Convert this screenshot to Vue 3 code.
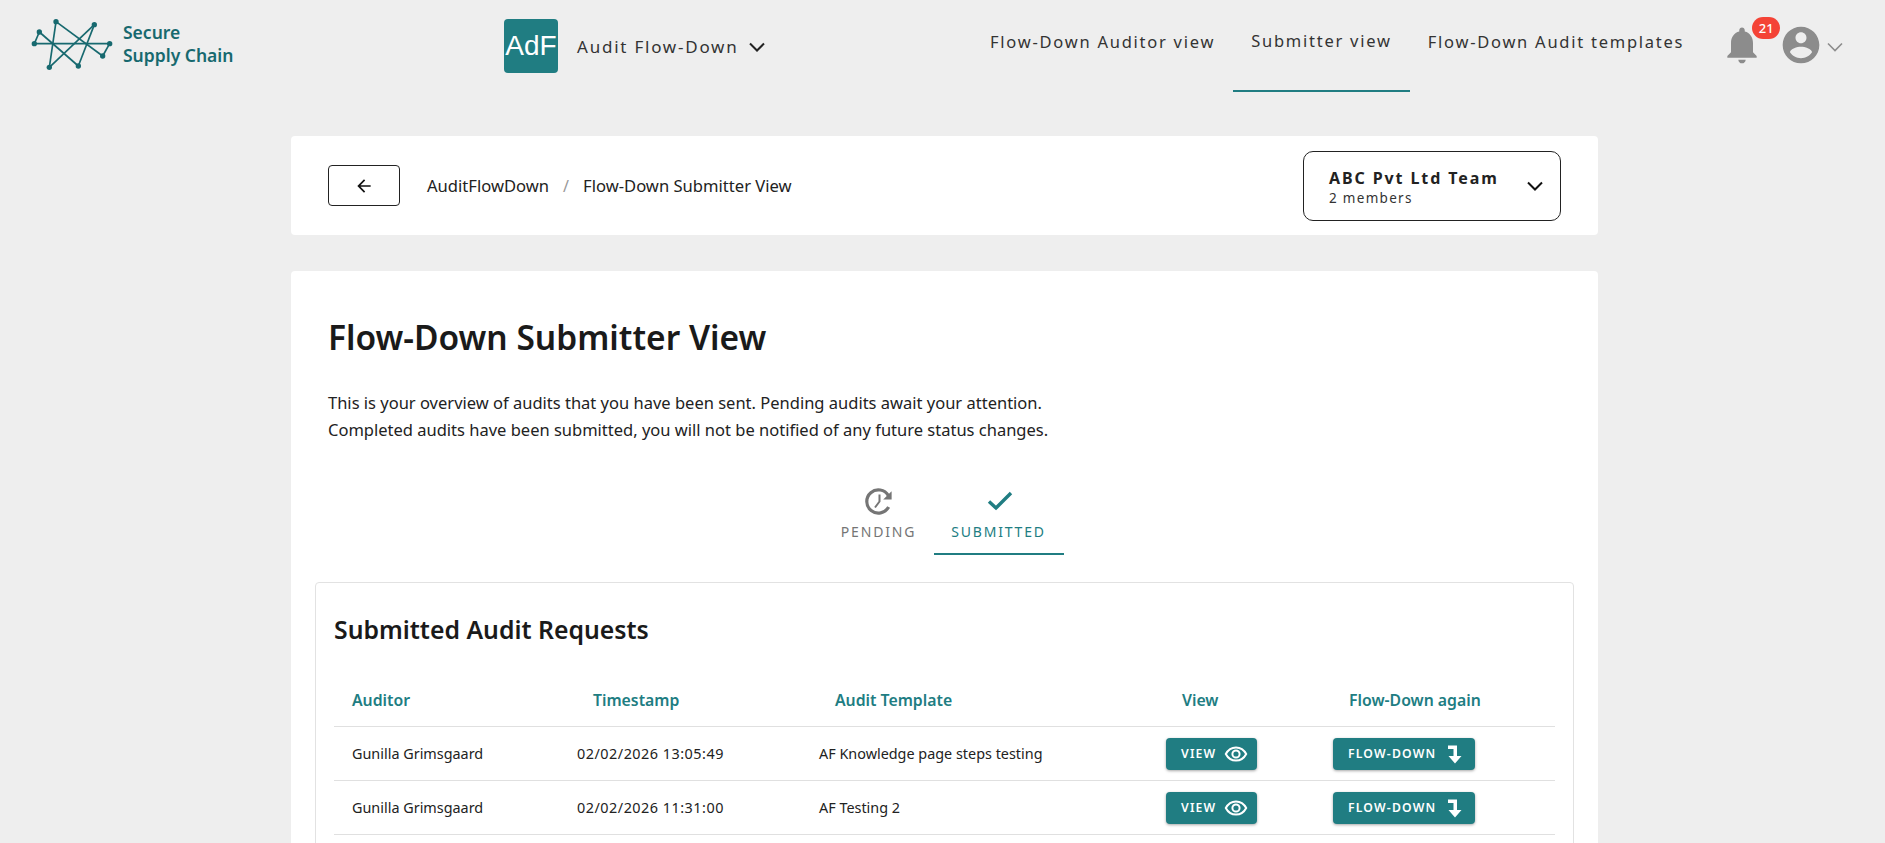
<script setup>
const rows = [
  { auditor: 'Gunilla Grimsgaard', time: '02/02/2026 13:05:49', template: 'AF Knowledge page steps testing' },
  { auditor: 'Gunilla Grimsgaard', time: '02/02/2026 11:31:00', template: 'AF Testing 2' }
]
const edges = [[43,101,269,101],[43,101,58,66],[58,66,175,168],[108,35,88,172],[108,35,248,138],[248,138,269,101],[88,172,223,44],[223,44,175,168]]
const nodes = [[43,101],[58,66],[108,35],[223,44],[269,101],[248,138],[175,168],[88,172]]
</script>

<template>
  <div class="page">
    <header class="topbar">
      <div class="brand">
        <svg class="logo" viewBox="0 0 300 210" width="100" height="70">
          <line v-for="(e, i) in edges" :key="i" :x1="e[0]" :y1="e[1]" :x2="e[2]" :y2="e[3]" stroke="#17696f" stroke-width="5" />
          <circle v-for="(n, i) in nodes" :key="'n' + i" :cx="n[0]" :cy="n[1]" r="8" fill="#17696f" />
        </svg>
        <div class="brand-text">Secure<br />Supply Chain</div>
      </div>
      <div class="app-switch">
        <div class="app-tile">AdF</div>
        <span class="app-name">Audit Flow-Down</span>
        <svg class="chev" width="18" height="12" viewBox="0 0 18 12"><path d="M2 2.500l7 7 7-7" fill="none" stroke="#222" stroke-width="2" /></svg>
      </div>
      <nav class="nav">
        <a class="nav-item">Flow-Down Auditor view</a>
        <a class="nav-item active">Submitter view</a>
        <a class="nav-item">Flow-Down Audit templates</a>
      </nav>
      <div class="bell">
        <svg width="44" height="44" viewBox="0 0 24 24"><path fill="#8c8c8c" d="M12 22c1.100 0 2-.9 2-2h-4c0 1.100.9 2 2 2zm6-6v-5c0-3.070-1.630-5.640-4.500-6.320V4c0-.83-.67-1.500-1.500-1.500s-1.500.67-1.500 1.500v.68C7.640 5.360 6 7.920 6 11v5l-2 2v1h16v-1l-2-2z" /></svg>
        <span class="badge">21</span>
      </div>
      <svg class="avatar" width="44" height="44" viewBox="0 0 24 24"><path fill="#8c8c8c" d="M12 2C6.480 2 2 6.480 2 12s4.480 10 10 10 10-4.480 10-10S17.520 2 12 2zm0 3c1.660 0 3 1.340 3 3s-1.340 3-3 3-3-1.340-3-3 1.340-3 3-3zm0 14.200c-2.500 0-4.710-1.280-6-3.220.03-1.990 4-3.080 6-3.080 1.990 0 5.970 1.090 6 3.080-1.290 1.940-3.500 3.220-6 3.220z" /></svg>
      <svg class="chev-small" width="18" height="12" viewBox="0 0 18 12"><path d="M2 2.500l7 7 7-7" fill="none" stroke="#8c8c8c" stroke-width="1.600" /></svg>
    </header>

    <main class="content">
      <section class="crumb-card">
        <button class="back">
          <svg width="20" height="20" viewBox="0 0 24 24"><path fill="#111" d="M20 11H7.830l5.590-5.590L12 4l-8 8 8 8 1.410-1.410L7.830 13H20v-2z" /></svg>
        </button>
        <span class="crumb">AuditFlowDown</span>
        <span class="sep">/</span>
        <span class="crumb">Flow-Down Submitter View</span>
        <div class="team">
          <div class="team-text">
            <div class="team-name">ABC Pvt Ltd Team</div>
            <div class="team-sub">2 members</div>
          </div>
          <svg width="18" height="12" viewBox="0 0 18 12"><path d="M2 2.500l7 7 7-7" fill="none" stroke="#111" stroke-width="2" /></svg>
        </div>
      </section>

      <section class="main-card">
        <h1>Flow-Down Submitter View</h1>
        <p class="intro">This is your overview of audits that you have been sent. Pending audits await your attention.<br />Completed audits have been submitted, you will not be notified of any future status changes.</p>

        <div class="tabs">
          <div class="tab pend">
            <svg width="30" height="30" viewBox="0 0 30 30">
              <path d="M24.400 9.600A11.600 11.600 0 1 0 24.600 21" fill="none" stroke="#757575" stroke-width="3.200" />
              <path d="M27.600 5.200V13.500H19.200Z" fill="#757575" />
              <path d="M15.500 8.500V15.500L11 21.500" fill="none" stroke="#757575" stroke-width="2" />
            </svg>
            <span>PENDING</span>
          </div>
          <div class="tab on">
            <svg width="30" height="30" viewBox="0 0 30 30"><path d="M5 15.500l7 6.500L27 7" fill="none" stroke="#207d82" stroke-width="3.400" /></svg>
            <span>SUBMITTED</span>
          </div>
        </div>

        <div class="panel">
          <h2>Submitted Audit Requests</h2>
          <div class="row head">
            <div class="c1">Auditor</div>
            <div class="c2">Timestamp</div>
            <div class="c3">Audit Template</div>
            <div class="c4">View</div>
            <div class="c5">Flow-Down again</div>
          </div>
          <div class="row" v-for="(r, i) in rows" :key="i">
            <div class="c1">{{ r.auditor }}</div>
            <div class="c2">{{ r.time }}</div>
            <div class="c3">{{ r.template }}</div>
            <div class="c4">
              <button class="btn">VIEW
                <svg width="24" height="24" viewBox="0 0 24 24">
                  <path d="M1.800 12C4 7.800 7.800 5.400 12 5.400s8 2.400 10.200 6.600c-2.200 4.200-6 6.600-10.200 6.600S4 16.200 1.800 12Z" fill="none" stroke="#fff" stroke-width="2" />
                  <circle cx="12" cy="12" r="3.600" fill="none" stroke="#fff" stroke-width="2" />
                </svg>
              </button>
            </div>
            <div class="c5">
              <button class="btn flow">FLOW-DOWN
                <svg width="16" height="20" viewBox="0 0 16 20"><path d="M1 1.500H10V12H14.500L8 19.500 1.500 12H6.500V5H1Z" fill="#fff" /></svg>
              </button>
            </div>
          </div>
        </div>
      </section>
    </main>
  </div>
</template>

<style>
html, body { margin: 0; height: 843px; overflow: hidden; background: #eeeeee; }
</style>

<style scoped>
.page { font-family: "Noto Sans", sans-serif; color: #222; height: 843px; overflow: hidden; background: #eee; }
.topbar { height: 92px; display: flex; align-items: flex-start; }
.brand { display: flex; align-items: center; margin: 10px 0 0 20px; width: 484px; height: 70px; }
.logo { flex: none; }
.brand-text { margin-left: 3px; margin-top: -3px; font-size: 17.500px; line-height: 23px; font-weight: 600; color: #17696f; }
.app-switch { display: flex; align-items: center; margin-top: 19px; width: 468px; }
.app-tile { width: 54px; height: 54px; border-radius: 4px; background: #207d82; color: #fff; font: 28px/54px "Liberation Sans", sans-serif; text-align: center; }
.app-name { margin-left: 19px; margin-top: 1px; font-size: 17px; letter-spacing: 1.770px; color: #333; }
.chev { margin-left: 9px; margin-top: 2px; }
.nav { display: flex; height: 92px; }
.nav-item { padding: 30px 18px 0; box-sizing: border-box; height: 92px; font-size: 16.500px; letter-spacing: 1.750px; color: #333; }
.nav-item.active { border-bottom: 2px solid #207d82; padding-top: 29px; }
.bell { position: relative; margin: 23px 0 0 18px; width: 44px; height: 44px; }
.badge { position: absolute; left: 32px; top: -6px; width: 28px; height: 22px; border-radius: 11px; background: #f44336; color: #fff; font-size: 13px; line-height: 22px; text-align: center; font-weight: 500; }
.avatar { margin: 23px 0 0 15px; }
.chev-small { margin: 41px 0 0 3px; }

.content { padding: 44px 287px 0 291px; }
.crumb-card { height: 99px; background: #fff; border-radius: 4px; display: flex; align-items: center; padding: 0 37px; box-sizing: border-box; }
.back { width: 72px; height: 41px; box-sizing: border-box; border: 1px solid #222; border-radius: 4px; background: #fff; display: flex; align-items: center; justify-content: center; padding: 0; margin-right: 27px; }
.crumb { font-size: 16.600px; color: #222; }
.sep { margin: 0 14px; color: #999; font-size: 16px; }
.team { margin-left: auto; width: 258px; height: 70px; box-sizing: border-box; border: 1px solid #222; border-radius: 10px; display: flex; align-items: center; justify-content: space-between; padding: 0 16px 0 25px; }
.team-text { margin-top: 2px; }
.team-name { font-size: 16px; font-weight: 700; letter-spacing: 1.900px; color: #222; line-height: 22px; }
.team-sub { font-size: 13.500px; letter-spacing: 1.300px; color: #333; line-height: 18px; }

.main-card { margin-top: 36px; background: #fff; border-radius: 4px; padding: 44px 24px 0; height: 600px; box-sizing: border-box; }
h1 { margin: 0 0 0 13px; font-size: 33.500px; line-height: 44px; font-weight: 600; color: #1a1a1a; }
.intro { margin: 30px 0 0 13px; font-size: 16.500px; line-height: 27px; color: #222; }
.tabs { display: flex; justify-content: center; margin-top: 43px; padding-right: 2px; }
.tab { width: 130px; height: 69px; box-sizing: border-box; display: flex; flex-direction: column; align-items: center; font-size: 14px; letter-spacing: 1.800px; color: #757575; }
.tab.pend { width: 110px; }
.tab span { margin-top: 6px; line-height: 20px; }
.tab.on { color: #207d82; border-bottom: 2px solid #207d82; }
.panel { margin-top: 27px; border: 1px solid #e2e2e2; border-radius: 4px; padding: 30px 18px 0; height: 400px; box-sizing: border-box; }
h2 { margin: 0; font-size: 24.800px; line-height: 32px; font-weight: 600; color: #1a1a1a; }
.row { display: grid; grid-template-columns: 225px 242px 347px 167px 241px; height: 54px; align-items: center; border-bottom: 1px solid #e0e0e0; box-sizing: border-box; font-size: 14.400px; color: #222; }
.row.head { margin-top: 28px; font-weight: 600; color: #207d82; font-size: 15.800px; }
.c1, .c2, .c3, .c4, .c5 { padding-left: 18px; }
.row:not(.head) .c2 { letter-spacing: .5px; }
.head .c2, .head .c3, .head .c4, .head .c5 { padding-left: 34px; }
.btn { height: 32px; display: inline-flex; align-items: center; gap: 8px; padding: 0 9px 0 15px; border: 0; border-radius: 4px; background: #207d82; color: #fff; font-family: inherit; font-size: 12.200px; font-weight: 600; letter-spacing: 1.200px; box-shadow: 0 1px 3px rgba(0,0,0,.35); }
.btn.flow { gap: 11px; padding-right: 12px; }
</style>
